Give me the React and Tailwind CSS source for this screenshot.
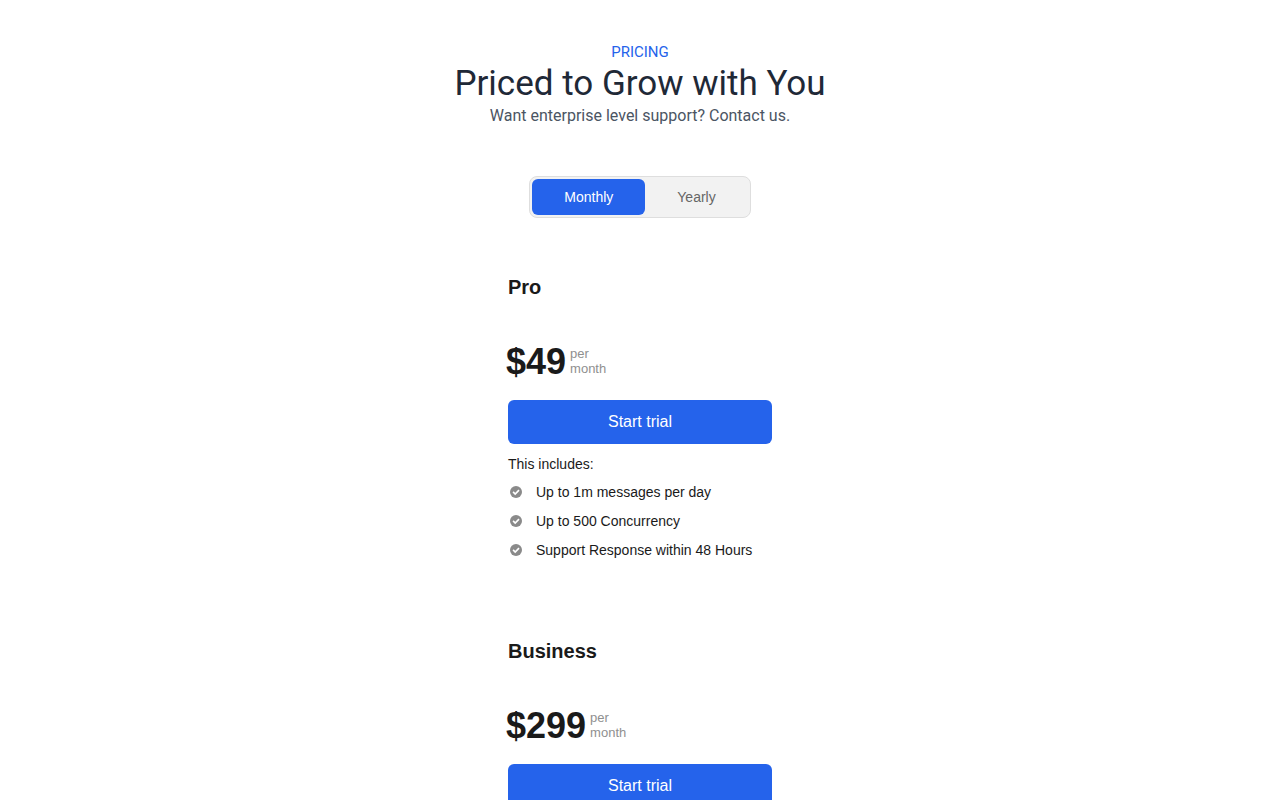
import { useState } from "react";

const plans = [
  {
    name: "Pro",
    price: "$49",
    features: [
      "Up to 1m messages per day",
      "Up to 500 Concurrency",
      "Support Response within 48 Hours",
    ],
  },
  { name: "Business", price: "$299", features: [] },
];

function CheckIcon() {
  return (
    <svg viewBox="0 0 16 16" className="size-4 shrink-0" aria-hidden="true">
      <circle cx="8" cy="8" r="6" fill="#8a8a8a" />
      <path
        d="M5.1 7.9 7.2 10 11 6.2"
        fill="none"
        stroke="#fff"
        strokeWidth="1.7"
      />
    </svg>
  );
}

function Toggle() {
  const [period, setPeriod] = useState("Monthly");
  return (
    <div className="flex rounded-lg border border-[#dedede] bg-[#f2f2f2] p-0.5">
      {["Monthly", "Yearly"].map((label) => (
        <button
          key={label}
          type="button"
          aria-pressed={period === label}
          onClick={() => setPeriod(label)}
          className={
            period === label
              ? "h-9 rounded-md bg-[#2563eb] px-8 text-sm text-white"
              : "h-9 rounded-md px-8 text-sm text-[#666666]"
          }
        >
          {label}
        </button>
      ))}
    </div>
  );
}

function Plan({ plan }) {
  return (
    <section className="w-full">
      <h2 className="text-xl leading-7 font-bold">{plan.name}</h2>
      <div className="mt-10 -ml-0.5 flex items-start gap-1">
        <span className="text-4xl leading-[42px] font-bold">{plan.price}</span>
        <span className="flex flex-col pt-[5px] text-[13px] leading-[15px] text-[#8f8f8f]">
          <span>per</span>
          <span>month</span>
        </span>
      </div>
      <button
        type="button"
        className="mt-[17px] h-11 w-full rounded-md bg-[#2563eb] text-base text-white"
      >
        Start trial
      </button>
      {plan.features.length > 0 && (
        <div className="mt-2.5 text-sm">
          <p>This includes:</p>
          <ul className="mt-2 flex flex-col gap-[9px]">
            {plan.features.map((feature) => (
              <li key={feature} className="flex items-center gap-3">
                <CheckIcon />
                <span>{feature}</span>
              </li>
            ))}
          </ul>
        </div>
      )}
    </section>
  );
}

export default function App() {
  return (
    <main className="flex flex-col items-center bg-white px-4 pt-10 font-['Liberation_Sans',Arial,sans-serif] text-[#1a1a1a]">
      <header className="text-center font-[Roboto,sans-serif]">
        <p className="text-[15px] leading-6 text-[#2563eb]">PRICING</p>
        <h1 className="text-[35px] leading-10 text-[#1f2937]">
          Priced to Grow with You
        </h1>
        <p className="text-base leading-6 text-[#4b5563]">
          Want enterprise level support? Contact us.
        </p>
      </header>
      <div className="mt-12">
        <Toggle />
      </div>
      <div className="mt-[55px] flex w-full max-w-[264px] flex-col gap-[77px]">
        {plans.map((plan) => (
          <Plan key={plan.name} plan={plan} />
        ))}
      </div>
    </main>
  );
}
